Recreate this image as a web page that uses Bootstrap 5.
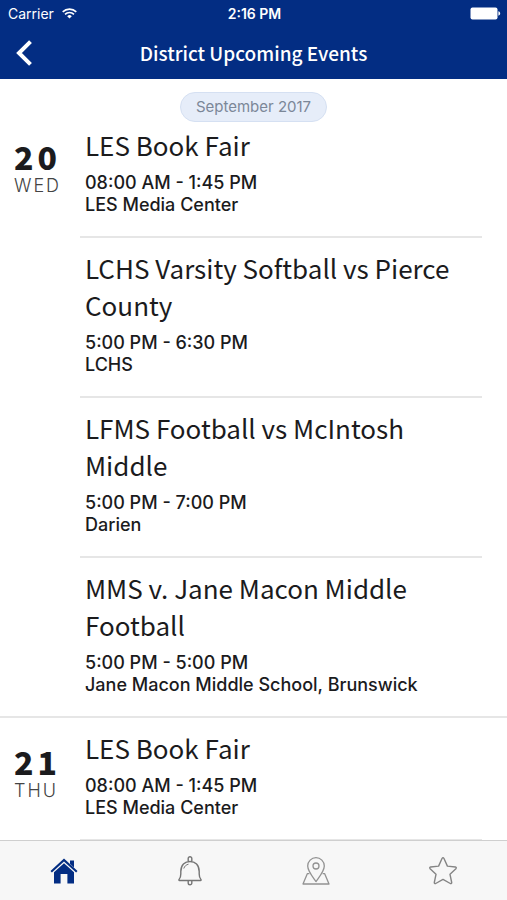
<!DOCTYPE html>
<html lang="en">
<head>
<meta charset="utf-8">
<meta name="viewport" content="width=device-width, initial-scale=1">
<title>District Upcoming Events</title>
<link href="https://cdn.jsdelivr.net/npm/bootstrap@5.3.0/dist/css/bootstrap.min.css" rel="stylesheet">
<style>
  body { font-family: Inter, "Liberation Sans", sans-serif; color: #1b1b1d; background: #fff; }
  .source { font-family: "Noto Sans CJK SC", "Noto Sans", sans-serif; }
  .app-header { background: #032d83; }
  .status-bar { height: 27px; font-size: 14px; padding: 0 6px 0 8px; }
  .title-bar { height: 52px; }
  .title-bar h1 { font-size: 19px; line-height: 24px; font-weight: 500; }
  .back-btn { padding: 8px 12px; line-height: 0; }
  .side { flex: 1 1 0; }
  .month-row { padding: 13px 0 4px; }
  .month-pill { font-size: 15px; line-height: 28px; padding: 0 15px; color: #7b8798; background: #e6edf9; border: 1px solid #d5e0f2; font-weight: 400; }
  .day-group + .day-group { border-top: 2px solid #e6e6e6; }
  .day-col { width: 80px; padding: 27px 0 0 14px; }
  .day-first .day-col { padding-top: 14px; }
  .day-num { font-size: 32px; line-height: 32px; font-weight: 900; letter-spacing: 4px; }
  .day-name { font-size: 18px; line-height: 28px; font-weight: 300; letter-spacing: 2px; color: #444; }
  .events { margin-right: 25px; min-width: 0; }
  .event { padding: 11px 5px 20px; border-bottom: 2px solid #e6e6e6; }
  .event h2 { font-size: 26px; line-height: 37px; font-weight: 400; margin-bottom: 9px; }
  .event p { font-size: 18px; line-height: 22px; font-weight: 500; }
  .day-first .event:first-child { padding-top: 0; }
  .day-first .event:last-child { border-bottom: 0; }
  .tab-bar { height: 60px; background: #f7f7f7; border-top: 1px solid #cfcfcf; }
  .tab-bar a { color: #8a8a8a; }
</style>
<script src="https://cdn.jsdelivr.net/npm/bootstrap@5.3.0/dist/js/bootstrap.bundle.min.js" defer></script>
</head>
<body class="vh-100 d-flex flex-column overflow-hidden">
<header class="app-header text-white flex-shrink-0">
  <div class="status-bar d-flex align-items-center">
    <div class="side d-flex align-items-center gap-2">
      <span>Carrier</span>
      <svg width="15" height="11" viewBox="0 0 15 11" fill="none" stroke="#fff" stroke-width="1.6" aria-hidden="true"><path d="M.7 3.9a9.7 9.7 0 0 1 13.6 0M3 6.4a6.4 6.4 0 0 1 9 0"/><path d="M7.5 10.6 5.2 8.2a3.3 3.3 0 0 1 4.6 0z" fill="#fff" stroke="none"/></svg>
    </div>
    <span class="fw-semibold">2:16 PM</span>
    <div class="side d-flex justify-content-end">
      <svg width="31" height="13" viewBox="0 0 31 13" fill="#fff" aria-hidden="true"><rect x=".5" y=".5" width="27" height="12" rx="2"/><path d="M28.4 4.3c2.4.7 2.4 3.7 0 4.4z"/></svg>
    </div>
  </div>
  <div class="title-bar d-flex align-items-center">
    <div class="side">
      <button type="button" class="btn back-btn border-0" aria-label="Back">
        <svg width="24" height="26" viewBox="0 0 24 26" fill="none" stroke="#fff" stroke-width="4"><path d="M18.500 1.600 7 13l11.500 11.400"/></svg>
      </button>
    </div>
    <h1 class="source mb-0">District Upcoming Events</h1>
    <div class="side"></div>
  </div>
</header>
<main class="flex-grow-1 overflow-hidden">
  <div class="month-row d-flex justify-content-center"><span class="month-pill rounded-pill">September 2017</span></div>
  <section class="day-group day-first d-flex">
    <div class="day-col flex-shrink-0">
      <div class="day-num source">20</div>
      <div class="day-name">WED</div>
    </div>
    <div class="events flex-grow-1">
      <article class="event"><h2 class="source">LES Book Fair</h2><p class="mb-0">08:00 AM - 1:45 PM</p><p class="mb-0">LES Media Center</p></article>
      <article class="event"><h2 class="source">LCHS Varsity Softball vs Pierce County</h2><p class="mb-0">5:00 PM - 6:30 PM</p><p class="mb-0">LCHS</p></article>
      <article class="event"><h2 class="source">LFMS Football vs McIntosh Middle</h2><p class="mb-0">5:00 PM - 7:00 PM</p><p class="mb-0">Darien</p></article>
      <article class="event"><h2 class="source">MMS v. Jane Macon Middle Football</h2><p class="mb-0">5:00 PM - 5:00 PM</p><p class="mb-0">Jane Macon Middle School, Brunswick</p></article>
    </div>
  </section>
  <section class="day-group d-flex">
    <div class="day-col flex-shrink-0">
      <div class="day-num source">21</div>
      <div class="day-name">THU</div>
    </div>
    <div class="events flex-grow-1">
      <article class="event"><h2 class="source">LES Book Fair</h2><p class="mb-0">08:00 AM - 1:45 PM</p><p class="mb-0">LES Media Center</p></article>
    </div>
  </section>
</main>
<nav class="tab-bar nav nav-fill flex-shrink-0 align-items-center" aria-label="Main">
  <a class="nav-item d-flex justify-content-center" href="#home" aria-label="Home">
    <svg width="28" height="26" viewBox="0 0 28 26" fill="#032d83"><path d="M20 2.500h4v7l-4-3.700z"/><path d="M14 .5.500 13l1.400 1.400L14 3.600l12.100 10.800 1.400-1.400z"/><path d="M14 5.200 4 14.200V25.500h6.600V16h6.800v9.500H24V14.200z"/></svg>
  </a>
  <a class="nav-item d-flex justify-content-center" href="#alerts" aria-label="Notifications">
    <svg width="26" height="30" viewBox="0 0 26 30" fill="none" stroke="#757575" stroke-width="1.400"><path d="M11.200 5.400V2.600a1.800 1.800 0 0 1 3.600 0v2.800M2.500 24.500h21c.7 0 .8-.6.4-1.100-1.200-1.300-1.700-3-1.700-5.400v-2.500C22.200 9 18.200 5.500 13 5.500S3.800 9 3.800 15.500V18c0 2.400-.5 4.100-1.700 5.400-.4.500-.3 1.100.4 1.100zM11.200 24.700v2.200a1.800 1.800 0 0 0 3.600 0v-2.200"/><path d="M6.800 12.500c.7-2.300 2.400-3.800 4.700-4.300" stroke-width="1"/></svg>
  </a>
  <a class="nav-item d-flex justify-content-center" href="#map" aria-label="Map">
    <svg width="28" height="28" viewBox="0 0 28 28" fill="none" stroke="#929292" stroke-width="1.300" stroke-linejoin="round"><path d="M14 24.500C10 19 5.700 14 5.700 9a8.300 8.300 0 0 1 16.600 0c0 5-4.300 10-8.300 15.500z"/><circle cx="14" cy="9" r="3"/><path d="M7.400 16.700H5.300L1 27h26l-4.300-10.300h-2.100"/></svg>
  </a>
  <a class="nav-item d-flex justify-content-center" href="#favorites" aria-label="Favorites">
    <svg width="28" height="28" viewBox="0 0 28 28" fill="none" stroke="#858585" stroke-width="1.400" stroke-linejoin="round"><path d="M13 1.500q1-1.600 2 0l3.400 7.600 8 .9q1.500.4.500 1.700L21 17.300l1.700 8.200q0 1.500-1.400 1L14 22.400l-7.300 4.100q-1.400.5-1.400-1L7 17.300l-5.900-5.600q-1-1.300.5-1.700l8-.9z"/></svg>
  </a>
</nav>
</body>
</html>
